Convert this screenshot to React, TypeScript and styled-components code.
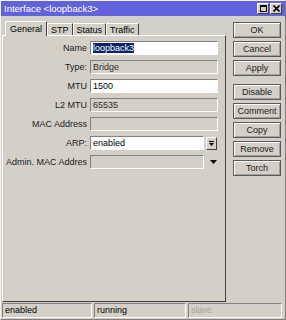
import React from 'react'
import styled, { createGlobalStyle } from 'styled-components'

const GlobalStyle = createGlobalStyle`
  body {
    margin: 0;
    background: #d4d0c8;
  }
  * {
    box-sizing: border-box;
  }
`

const Window = styled.div`
  width: 286px;
  height: 320px;
  display: flex;
  flex-direction: column;
  background: #d4d0c8;
  border: 1px solid;
  border-color: #f4f3f0 #808080 #808080 #f4f3f0;
  font-family: 'Liberation Sans', Arial, sans-serif;
  font-size: 9px;
  color: #000;
  overflow: hidden;
`

const TitleBar = styled.div`
  height: 15px;
  display: flex;
  align-items: center;
  justify-content: space-between;
  padding: 0 3px 0 3px;
  background: #6262da;
  color: #fff;
  font-size: 9.5px;
`

const TitleControls = styled.div`
  display: flex;
  gap: 1px;
`

const TitleButton = styled.div`
  width: 12px;
  height: 11px;
  display: flex;
  align-items: center;
  justify-content: center;
  background: #d4d0c8;
  border: 1px solid;
  border-color: #fff #404040 #404040 #fff;
`

const Body = styled.div`
  flex: 1;
  display: flex;
  padding-left: 1px;
`

const LeftCol = styled.div`
  width: 224px;
  display: flex;
  flex-direction: column;
`

const TabRow = styled.div`
  height: 19px;
  display: flex;
  align-items: flex-end;
  padding-left: 3px;
  position: relative;
  z-index: 1;
`

const Tab = styled.div<{ $active?: boolean }>`
  height: ${p => (p.$active ? '15px' : '12px')};
  margin-bottom: ${p => (p.$active ? '-1px' : '0')};
  padding: ${p => (p.$active ? '2px 4px 0' : '1px 3px 0')};
  background: #d4d0c8;
  border: 1px solid;
  border-bottom: none;
  border-color: #fff #404040 transparent #fff;
  white-space: nowrap;
`

const Panel = styled.div`
  flex: 1;
  display: flex;
  flex-direction: column;
  gap: 5px;
  padding-top: 5px;
  border: 1px solid;
  border-color: #fff #404040 #404040 #fff;
`

const Row = styled.div`
  height: 14px;
  display: flex;
  align-items: center;
`

const Label = styled.div`
  width: 84px;
  margin-right: 3px;
  text-align: right;
  white-space: nowrap;
  color: #1a1a1a;
`

const Field = styled.div<{ $disabled?: boolean; $width?: number }>`
  width: ${p => p.$width ?? 128}px;
  height: 14px;
  padding-left: 2px;
  line-height: 12px;
  background: ${p => (p.$disabled ? '#d4d0c8' : '#fff')};
  color: ${p => (p.$disabled ? '#2e2e2e' : '#000')};
  border: 1px solid;
  border-color: #808080 #fff #fff #808080;
  white-space: nowrap;
  overflow: hidden;
`

const Selected = styled.span`
  background: #0a246a;
  color: #fff;
`

const ComboButton = styled.div`
  width: 11px;
  height: 13px;
  margin-left: 2px;
  display: flex;
  align-items: center;
  justify-content: center;
  border: 1px solid;
  border-color: #fff #404040 #404040 #fff;
`

const PlainArrow = styled.div`
  width: 11px;
  margin-left: 4px;
  display: flex;
  justify-content: center;
`

const ButtonCol = styled.div`
  width: 48px;
  margin-left: 7px;
  padding-top: 6px;
  display: flex;
  flex-direction: column;
  gap: 3px;
`

const Button = styled.div<{ $gapBefore?: boolean }>`
  height: 16px;
  margin-top: ${p => (p.$gapBefore ? '5px' : '0')};
  display: flex;
  align-items: center;
  justify-content: center;
  border: 1px solid #5a5a5a;
  box-shadow: inset 1px 1px 0 #fff, inset -1px -1px 0 #a0a0a0;
  background: #d4d0c8;
  color: #1a1a1a;
`

const StatusBar = styled.div`
  height: 15px;
  margin: 1px 0 1px;
  padding-left: 1px;
  display: flex;
  gap: 2px;
`

const StatusCell = styled.div<{ $width: number; $muted?: boolean }>`
  width: ${p => p.$width}px;
  height: 15px;
  padding-left: 2px;
  line-height: 13px;
  color: ${p => (p.$muted ? '#a6a39c' : '#000')};
  border: 1px solid;
  border-color: #808080 #fff #fff #808080;
`

const ComboArrow = () => (
  <svg width='5' height='5' viewBox='0 0 5 5'>
    <rect x='0' y='0' width='5' height='1' fill='#000' />
    <path d='M0 2 H5 L2.5 5 Z' fill='#000' />
  </svg>
)

const DownArrow = () => (
  <svg width='7' height='4' viewBox='0 0 7 4'>
    <path d='M0 0 H7 L3.5 4 Z' fill='#000' />
  </svg>
)

const tabs = ['General', 'STP', 'Status', 'Traffic']
const buttons = ['OK', 'Cancel', 'Apply', 'Disable', 'Comment', 'Copy', 'Remove', 'Torch']

export default function App() {
  return (
    <>
      <GlobalStyle />
      <Window>
        <TitleBar>
          <span>Interface &lt;loopback3&gt;</span>
          <TitleControls>
            <TitleButton>
              <svg width='7' height='7' viewBox='0 0 7 7'>
                <rect x='0.5' y='0.5' width='6' height='6' fill='none' stroke='#000' />
                <rect x='0' y='0' width='7' height='2' fill='#000' />
              </svg>
            </TitleButton>
            <TitleButton>
              <svg width='7' height='7' viewBox='0 0 7 7'>
                <path d='M0.5 0.5 L6.5 6.5 M6.5 0.5 L0.5 6.5' stroke='#000' strokeWidth='1.6' />
              </svg>
            </TitleButton>
          </TitleControls>
        </TitleBar>
        <Body>
          <LeftCol>
            <TabRow>
              {tabs.map((t, i) => (
                <Tab key={t} $active={i === 0}>{t}</Tab>
              ))}
            </TabRow>
            <Panel>
              <Row>
                <Label>Name</Label>
                <Field><Selected>loopback3</Selected></Field>
              </Row>
              <Row>
                <Label>Type:</Label>
                <Field $disabled>Bridge</Field>
              </Row>
              <Row>
                <Label>MTU</Label>
                <Field>1500</Field>
              </Row>
              <Row>
                <Label>L2 MTU</Label>
                <Field $disabled>65535</Field>
              </Row>
              <Row>
                <Label>MAC Address</Label>
                <Field $disabled />
              </Row>
              <Row>
                <Label>ARP:</Label>
                <Field $width={114}>enabled</Field>
                <ComboButton><ComboArrow /></ComboButton>
              </Row>
              <Row>
                <Label>Admin. MAC Addres</Label>
                <Field $disabled $width={114} />
                <PlainArrow><DownArrow /></PlainArrow>
              </Row>
            </Panel>
          </LeftCol>
          <ButtonCol>
            {buttons.map(b => (
              <Button key={b} $gapBefore={b === 'Disable'}>{b}</Button>
            ))}
          </ButtonCol>
        </Body>
        <StatusBar>
          <StatusCell $width={90}>enabled</StatusCell>
          <StatusCell $width={92}>running</StatusCell>
          <StatusCell $width={94} $muted>slave</StatusCell>
        </StatusBar>
      </Window>
    </>
  )
}
